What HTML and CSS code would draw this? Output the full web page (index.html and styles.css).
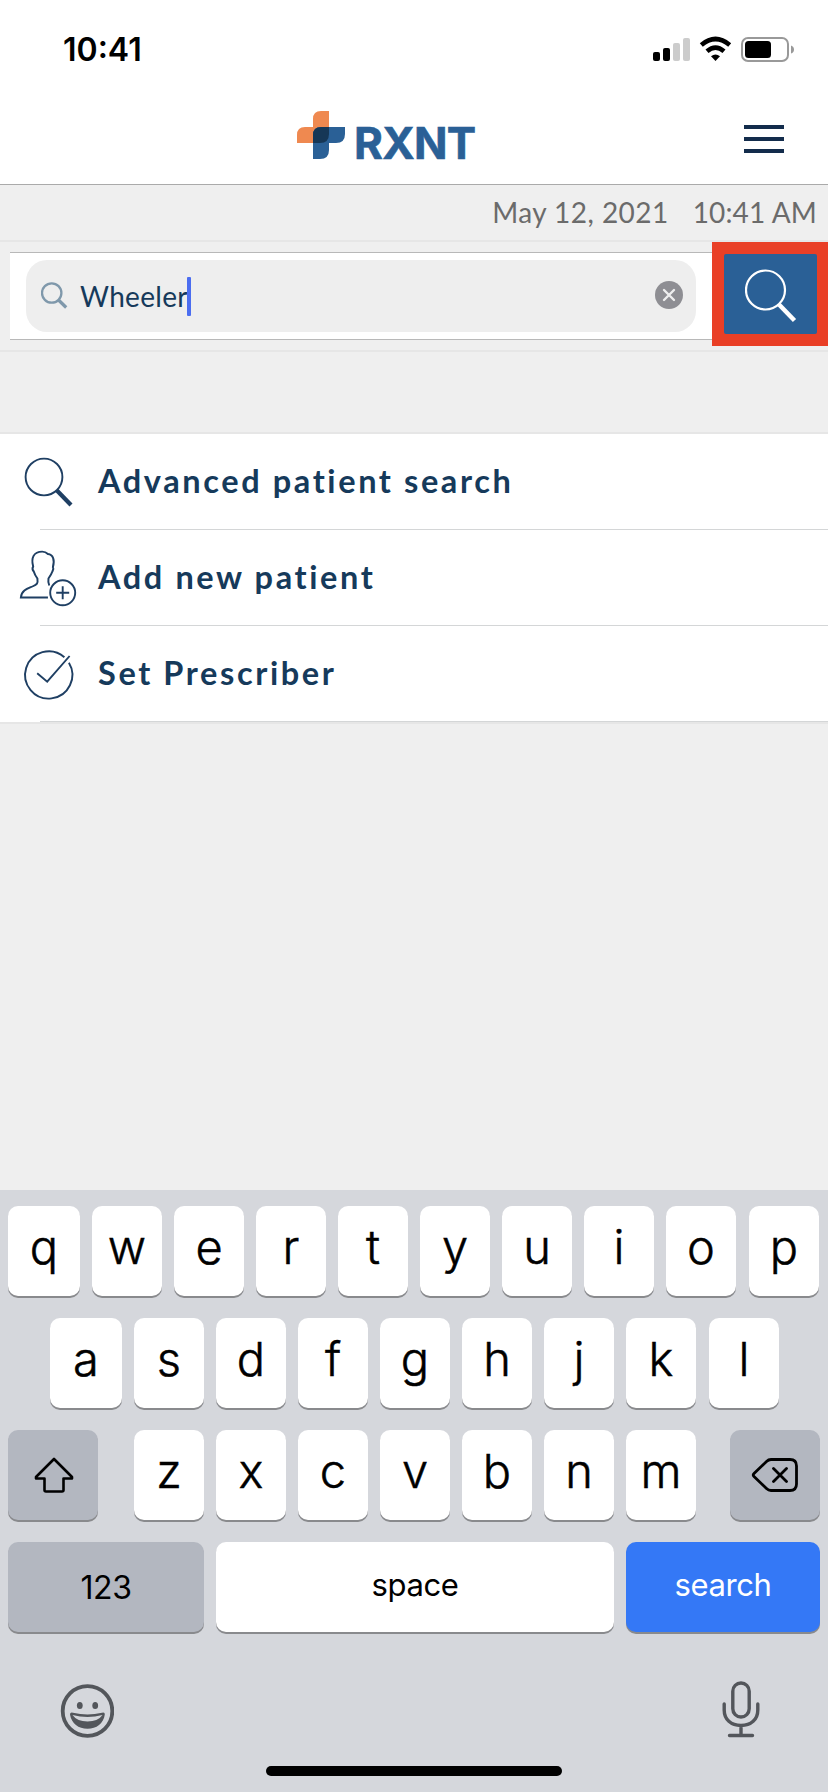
FILE: index.html
```html
<!DOCTYPE html>
<html lang="en">
<head>
<meta charset="utf-8">
<title>RXNT</title>
<link rel="stylesheet" href="styles.css">
</head>
<body>
<div class="phone">
  <div class="status">
    <span class="clock">10:41</span>
    <svg class="status-icons" width="144" height="28" viewBox="0 0 144 28">
      <rect x="1" y="17" width="7" height="9" rx="2"/>
      <rect x="11" y="13" width="7" height="13" rx="2"/>
      <rect x="21" y="8" width="7" height="18" rx="2" fill="#ccc"/>
      <rect x="31" y="3" width="7" height="23" rx="2" fill="#ccc"/>
      <g fill="none" stroke="#000" stroke-width="4.6">
        <path d="M49.3 10Q63.5-2 77.700 10"/>
        <path d="M55 16.300Q63.500 9 72 16.300"/>
      </g>
      <path d="M59 21.300Q63.500 17.700 68 21.300L63.500 26Z"/>
      <rect x="90" y="3" width="46" height="23" rx="6" fill="none" stroke="#999" stroke-width="2"/>
      <rect x="93" y="6" width="26" height="17" rx="3.500"/>
      <path d="M139 10.500Q142 11.500 142 14.500Q142 17.500 139 18.500Z" fill="#999"/>
    </svg>
  </div>
  <header class="header">
    <div class="logo">
      <svg width="48" height="48" viewBox="0 0 48 48">
        <path d="M32 0H24Q16 0 16 8V16H8Q0 16 0 24V32H24Q32 32 32 24Z" fill="#ef8950"/>
        <path d="M16 48V24Q16 16 24 16H48V23Q48 32 39 32H32V39Q32 48 23 48Z" fill="#2a6096"/>
        <path d="M32 16H24Q16 16 16 24V32H23Q32 32 32 23Z" fill="#163756"/>
      </svg>
      <span class="logo-text">RXNT</span>
    </div>
    <div class="burger"><i></i><i></i><i></i></div>
  </header>
  <div class="datebar"><span class="date">May 12, 2021</span><span class="time">10:41 AM</span></div>
  <div class="searchrow">
    <div class="searchbox">
      <div class="field">
        <svg class="field-icon" width="28" height="28" viewBox="0 0 28 28" fill="none" stroke="#7f98ab">
          <circle cx="10.700" cy="11" r="9.700" stroke-width="2.300"/>
          <path d="M17.500 18L25.200 25.500" stroke-width="3.200"/>
        </svg>
        <span class="query">Wheeler</span><i class="caret"></i>
        <svg class="clear" width="28" height="28" viewBox="0 0 28 28">
          <circle cx="14" cy="14" r="14" fill="#8e8e93"/>
          <path d="M9 9L19 19M19 9L9 19" stroke="#eee" stroke-width="2.400" stroke-linecap="round"/>
        </svg>
      </div>
    </div>
    <div class="highlight">
      <div class="go">
        <svg width="52" height="54" viewBox="0 0 52 54" fill="none" stroke="#fff">
          <circle cx="20.500" cy="21" r="19.500" stroke-width="2.200"/>
          <path d="M34 35.500L49.500 51.500" stroke-width="4.500"/>
        </svg>
      </div>
    </div>
  </div>
  <div class="gap"></div>
  <ul class="menu">
    <li>
      <svg class="ico" width="60" height="60" viewBox="0 0 60 60" fill="none" stroke="#1f3f63">
        <circle cx="26" cy="25" r="18.400" stroke-width="1.900"/>
        <path d="M38.700 38.200L53 53" stroke-width="4.200"/>
      </svg>
      <span>Advanced patient search</span>
    </li>
    <li>
      <svg class="ico" width="60" height="60" viewBox="0 0 60 60" fill="none" stroke="#1f3f63" stroke-width="1.900">
        <path transform="translate(.5 0) scale(1.033 1)" d="M28.500 49.500H2.300C3 42 9 40.500 13.500 38.500C18 36.500 19 35.500 18.300 30.500C16.500 28 15.500 26 14.800 23.500C13 21.500 13.300 20 14.200 18.500C12 10 14.500 3.600 23 3.600C26 3.600 27 4.500 28.500 6C33.500 6.500 35.300 12 33.300 19C34.300 20.500 33.500 22 32.800 23.500C32 26 31 27.500 29 30.500C28.500 33.500 28.800 35 29.800 37.500"/>
        <circle cx="44.700" cy="44.800" r="12.500"/>
        <path d="M38.200 44.800H51.200M44.700 38.300V51.300"/>
      </svg>
      <span>Add new patient</span>
    </li>
    <li>
      <svg class="ico" width="60" height="60" viewBox="0 0 60 60" fill="none" stroke="#1f3f63" stroke-width="1.900">
        <path d="M46.400 13.300A23.600 23.600 0 1 0 50.900 18.700"/>
        <path d="M19.200 29.300L29.200 37.700L51.600 12"/>
      </svg>
      <span>Set Prescriber</span>
    </li>
  </ul>
  <div class="content"></div>
  <div class="keyboard">
    <div class="row"><b>q</b><b>w</b><b>e</b><b>r</b><b>t</b><b>y</b><b>u</b><b>i</b><b>o</b><b>p</b></div>
    <div class="row second"><b>a</b><b>s</b><b>d</b><b>f</b><b>g</b><b>h</b><b>j</b><b>k</b><b>l</b></div>
    <div class="row third">
      <div class="key shift">
        <svg width="42" height="38" viewBox="0 0 42 38" fill="none" stroke="#000" stroke-width="2.600" stroke-linejoin="round"><path d="M22 3L40 21V22.500H31.500V34Q31.500 35.500 30 35.500H14Q12.500 35.500 12.500 34V22.500H4V21Z"/></svg>
      </div>
      <div class="letters"><b>z</b><b>x</b><b>c</b><b>v</b><b>b</b><b>n</b><b>m</b></div>
      <div class="key shift">
        <svg width="48" height="36" viewBox="0 0 48 36" fill="none" stroke="#000" stroke-width="2.800" stroke-linejoin="round" stroke-linecap="round"><path d="M20 2.500H39Q45.500 2.500 45.500 9V27Q45.500 33.500 39 33.500H20Q17.500 33.500 15.500 31.500L3 19.500Q1.500 18 3 16.500L15.500 4.500Q17.500 2.500 20 2.500ZM22.500 11.500L35.500 24.500M35.500 11.500L22.500 24.500"/></svg>
      </div>
    </div>
    <div class="row fourth"><div class="key num">123</div><div class="key space">space</div><div class="key search">search</div></div>
    <div class="tools">
      <svg width="54" height="54" viewBox="0 0 54 54">
        <circle cx="27.500" cy="27" r="24.800" fill="none" stroke="#53565b" stroke-width="3.800"/>
        <ellipse cx="19.800" cy="21.500" rx="2.900" ry="3.500" fill="#53565b"/>
        <ellipse cx="35.200" cy="21.500" rx="2.900" ry="3.500" fill="#53565b"/>
        <path d="M10 30.500Q10 27.800 13 28.700Q27.500 32.300 42 28.700Q45 27.800 44.800 30.500C43.500 39.500 36.500 44.800 27.500 44.800S11.500 39.500 10 30.500Z" fill="#53565b"/>
        <path d="M12.500 31Q27.500 34.800 42.500 31Q38 37.500 27.500 37.500T12.500 31Z" fill="#d5d7dc"/>
      </svg>
      <svg class="mic" width="38" height="58" viewBox="0 0 38 58" fill="none" stroke="#53565b" stroke-width="3.400" stroke-linecap="round">
        <rect x="10.800" y="3" width="16.400" height="34" rx="8.200"/>
        <path d="M2.200 24V30C2.200 39.500 9 45.500 19 45.500S35.800 39.500 35.800 30V24M19 46V55.500M7.500 55.500H30.500"/>
      </svg>
    </div>
    <div class="home"></div>
  </div>
</div>
</body>
</html>
```
FILE: styles.css
```css
* { box-sizing: border-box; }
body { margin: 0; background: #efefef; }
svg { display: block; flex: none; }
.phone { width: 828px; height: 1792px; display: flex; flex-direction: column; font-family: Lato, sans-serif; overflow: hidden; }
.phone > * { flex: none; }

.status { height: 98px; background: #fff; display: flex; justify-content: space-between; align-items: center; padding: 0 32px 0 63px; }
.clock { font: 600 32px/40px Inter, sans-serif; padding-top: 2px; }
.header { height: 87px; background: #fff; border-bottom: 1px solid #aaa; display: flex; justify-content: space-between; align-items: flex-start; padding: 13px 44px 0 297px; }
.logo { display: flex; gap: 8px; }
.logo-text { font: 700 44px/48px Inter, sans-serif; color: #2a6096; padding: 8px 0 0 1px; letter-spacing: -0.700px; -webkit-text-stroke: 0.600px #2a6096; }
.burger { width: 40px; display: flex; flex-direction: column; gap: 8px; padding-top: 14px; }
.burger i { height: 4px; background: #132c4c; }

.datebar { height: 57px; border-bottom: 2px solid #e6e6e6; display: flex; justify-content: flex-end; align-items: center; gap: 24px; padding: 0 11px 2px 0; font-size: 28px; color: #6b6b6b; }
.date { letter-spacing: 0.450px; }
.time { letter-spacing: 0.150px; }
.searchrow { height: 110px; border-bottom: 2px solid #e6e6e6; display: flex; align-items: flex-start; padding-left: 10px; }
.searchbox { width: 702px; height: 88px; margin-top: 10px; background: #fff; border: solid #b8b8b8; border-width: 1px 0; padding: 7px 16px; }
.field { height: 72px; background: #eee; border-radius: 21px; display: flex; align-items: center; padding: 0 13px 0 15px; }
.query { font-size: 28px; color: #163a5b; margin-left: 11px; padding-bottom: 1px; letter-spacing: 0.300px; }
.caret { width: 4px; height: 39px; background: #4b6df0; border-radius: 1px; margin-left: -1px; }
.clear { margin-left: auto; margin-bottom: 2px; }
.highlight { width: 116px; height: 104px; background: #e93f26; padding: 12px 11px 12px 12px; }
.go { height: 80px; background: #2a6096; border-radius: 2px; display: flex; padding: 15px 0 0 21px; }
.gap { height: 82px; border-bottom: 2px solid #e6e6e6; }

.menu { list-style: none; margin: 0; padding: 0; background: #fff; border-bottom: 2px solid #e6e6e6; color: #163a5b; font-size: 32.500px; font-weight: 700; letter-spacing: 2.600px; }
.menu li { height: 96px; display: flex; align-items: center; padding-left: 18px; background: linear-gradient(#d4d6d7, #d4d6d7) 40px 95px / 100% 1px no-repeat; }
.menu span { margin-left: 20px; padding-bottom: 4px; }
.content { height: 466px; }

.keyboard { height: 602px; background: #d5d7dc; padding: 16px 8px 0; font-family: Inter, sans-serif; }
.row { display: flex; gap: 12px; height: 90px; margin-bottom: 22px; }
.row b, .key { height: 90px; border-radius: 10px; background: #fff; box-shadow: 0 2px 0 #898a8d; display: flex; align-items: center; justify-content: center; flex: none; }
.row b { width: 70px; font-size: 47px; font-weight: 300; line-height: 56px; padding-bottom: 8px; -webkit-text-stroke: 0.500px #000; }
.row > b:first-child { width: 72px; }
.row > b:last-child { margin-left: 1px; }
.second { padding-left: 42px; }
.third { justify-content: space-between; gap: 0; }
.letters { display: flex; gap: 12px; margin-left: 2px; }
.row .shift { width: 90px; background: #b3b7c0; }
.fourth .key { font-size: 31px; letter-spacing: -0.400px; padding-bottom: 5px; }
.fourth .num { width: 196px; background: #b3b7c0; font-size: 32px; padding-bottom: 0; }
.fourth .space { width: 398px; }
.fourth .search { width: 194px; background: #3478f6; color: #fff; }
.tools { display: flex; justify-content: space-between; align-items: flex-start; padding: 30px 60px 0 52px; height: 112px; }
.mic { margin-top: -4px; }
.home { width: 296px; height: 10px; border-radius: 5px; background: #000; margin: 0 auto; }
```
